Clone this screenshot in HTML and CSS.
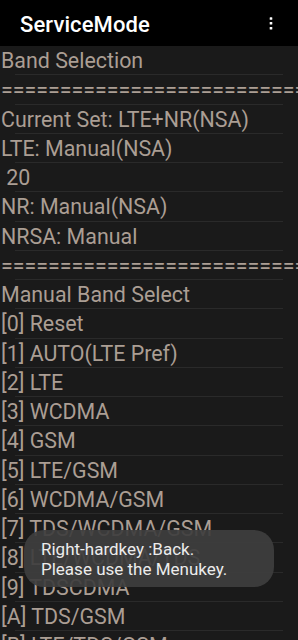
FILE: index.html
```html
<!DOCTYPE html>
<html>
<head>
<meta charset="utf-8">
<link rel="stylesheet" href="styles.css">
</head>
<body>
<div class="app">
  <header class="bar">
    <h1 class="title">ServiceMode</h1>
    <svg class="more" width="4" height="14" viewBox="0 0 4 14"><rect x="0.7" y="0.2" width="2.6" height="2.6" rx="0.6" fill="#fff"/><rect x="0.7" y="5" width="2.6" height="2.6" rx="0.6" fill="#fff"/><rect x="0.7" y="9.9" width="2.6" height="2.6" rx="0.6" fill="#fff"/></svg>
  </header>
  <ul class="list">
    <li class="row">Band Selection</li>
    <li class="row eq">==============================</li>
    <li class="row">Current Set: LTE+NR(NSA)</li>
    <li class="row">LTE: Manual(NSA)</li>
    <li class="row">&nbsp;20</li>
    <li class="row">NR: Manual(NSA)</li>
    <li class="row">NRSA: Manual</li>
    <li class="row eq">==============================</li>
    <li class="row">Manual Band Select</li>
    <li class="row">[0] Reset</li>
    <li class="row">[1] AUTO(LTE Pref)</li>
    <li class="row">[2] LTE</li>
    <li class="row">[3] WCDMA</li>
    <li class="row">[4] GSM</li>
    <li class="row">[5] LTE/GSM</li>
    <li class="row">[6] WCDMA/GSM</li>
    <li class="row">[7] TDS/WCDMA/GSM</li>
    <li class="row">[8] LTE/WCDMA/TDS</li>
    <li class="row">[9] TDSCDMA</li>
    <li class="row">[A] TDS/GSM</li>
    <li class="row">[B] LTE/TDS/GSM</li>
  </ul>
  <div class="toast">Right-hardkey :Back.<br>Please use the Menukey.</div>
</div>
</body>
</html>
```
FILE: styles.css
```css
html, body { margin: 0; padding: 0; background: #1a1a1a; }
body { font-family: Roboto, "Noto Sans", sans-serif; overflow: hidden; }
.app { width: 298px; height: 640px; position: relative; overflow: hidden; background: #1a1a1a; }
.bar { height: 46px; background: #000; display: flex; align-items: center; justify-content: space-between; padding: 2px 25px 0 20px; box-sizing: border-box; }
.title { margin: 0; color: #fff; font-size: 22px; font-weight: 500; letter-spacing: 0.1px; }
.more { display: block; margin-top: 0; }
.list { list-style: none; margin: 0; padding: 0; }
.row { height: 29.25px; box-sizing: border-box; padding-top: 1px; color: #ab9e94; font-size: 21.4px; line-height: 28px; white-space: nowrap; overflow: hidden; position: relative; padding-left: 1px; }
.row::after { content: ""; position: absolute; left: 15px; right: 15px; bottom: 0; height: 1px; background: #2a2a2a; }
.toast { position: absolute; left: 24px; top: 530px; width: 250px; height: 57px; box-sizing: border-box; padding: 9px 0 0 17px; background: rgba(62,62,62,0.92); border-radius: 20px; color: #ececec; font-size: 17px; line-height: 20px; }
```
